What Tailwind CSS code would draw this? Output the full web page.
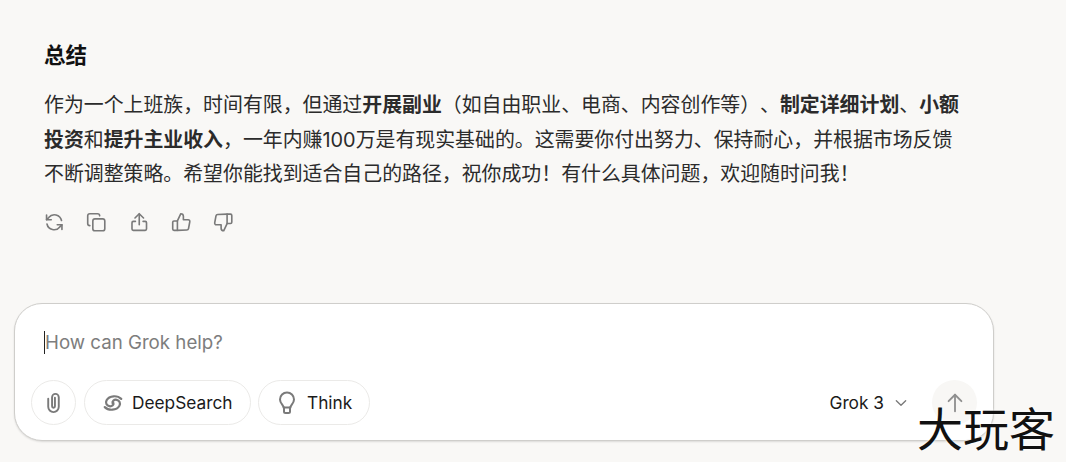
<!DOCTYPE html>
<html lang="zh-CN">
<head>
  <meta charset="UTF-8">
  <meta name="viewport" content="width=device-width, initial-scale=1.0">
  <title>Grok</title>
  <script src="https://cdn.jsdelivr.net/npm/@tailwindcss/browser@4"></script>
</head>
<body class="bg-[#f9f8f6] text-[#1a1a1a] font-['Inter','Noto_Sans_CJK_SC',sans-serif] overflow-hidden">
  <div class="relative h-[462px] w-[1066px]">
    <!-- message -->
    <div class="pl-[44px] pt-[39px]">
      <h3 class="text-[21.5px] leading-[32px] font-bold text-[#111]">总结</h3>
      <p class="mt-[17px] w-[920px] text-[19.9px] leading-[34.500px] text-[#2b2b2b] [text-spacing-trim:space-all]">作为一个上班族，时间有限，但通过<strong class="font-bold">开展副业</strong>（如自由职业、电商、内容创作等）、<strong class="font-bold">制定详细计划</strong>、<strong class="font-bold">小额投资</strong>和<strong class="font-bold">提升主业收入</strong>，一年内赚100万是有现实基础的。这需要你付出努力、保持耐心，并根据市场反馈不断调整策略。希望你能找到适合自己的路径，祝你成功！有什么具体问题，欢迎随时问我！</p>
      <div class="mt-[20px] flex gap-[21.800px] text-[#7a7a7a]">
        <svg class="size-[20.500px]" viewBox="0 0 24 24" fill="none" stroke="currentColor" stroke-width="1.900" stroke-linecap="round" stroke-linejoin="round"><path d="M20.500 10A8.500 8.500 0 0 0 5.500 6.500L3 9"/><path d="M3 3.500V9h5.500"/><path d="M3.500 14a8.500 8.500 0 0 0 15 3.500L21 15"/><path d="M21 20.500V15h-5.500"/></svg>
        <svg class="size-[20.500px]" viewBox="0 0 24 24" fill="none" stroke="currentColor" stroke-width="1.900" stroke-linecap="round" stroke-linejoin="round"><rect x="8" y="8" width="14" height="14" rx="2.500"/><path d="M4.500 16A2.500 2.500 0 0 1 2 13.500V4.500A2.500 2.500 0 0 1 4.500 2h9A2.500 2.500 0 0 1 16 4.500"/></svg>
        <svg class="size-[20.500px]" viewBox="0 0 24 24" fill="none" stroke="currentColor" stroke-width="1.900" stroke-linecap="round" stroke-linejoin="round"><path d="M12 15V2.500"/><path d="M7 7l5-5 5 5"/><path d="M7.500 11H5a1.500 1.500 0 0 0-1.500 1.500V20A1.500 1.500 0 0 0 5 21.500h14a1.500 1.500 0 0 0 1.500-1.500v-7.500A1.500 1.500 0 0 0 19 11h-2.500"/></svg>
        <svg class="size-[20.500px]" viewBox="0 0 24 24" fill="none" stroke="currentColor" stroke-width="1.900" stroke-linecap="round" stroke-linejoin="round"><path d="M7.500 10.500v11"/><path d="M7.500 21.500H3.500A1.500 1.500 0 0 1 2 20v-8a1.500 1.500 0 0 1 1.500-1.500h4l4-8.500a3 3 0 0 1 3 3v4h5.500a2 2 0 0 1 2 2.400l-1.500 8a2 2 0 0 1-2 1.600z"/></svg>
        <svg class="size-[20.500px]" viewBox="0 0 24 24" fill="none" stroke="currentColor" stroke-width="1.900" stroke-linecap="round" stroke-linejoin="round"><path d="M16.500 13.500v-11"/><path d="M16.500 2.500h4A1.500 1.500 0 0 1 22 4v8a1.500 1.500 0 0 1-1.500 1.500h-4l-4 8.500a3 3 0 0 1-3-3v-4H4a2 2 0 0 1-2-2.400l1.500-8a2 2 0 0 1 2-1.600z"/></svg>
      </div>
    </div>

    <!-- composer -->
    <div class="absolute left-[14px] top-[303px] h-[138px] w-[980px] rounded-[28px] border border-[#cfcecb] bg-white shadow-[0_1px_2px_rgba(0,0,0,0.12)]">
      <div class="pl-[29px] pt-[26px] text-[18.700px] leading-[26px] text-[#7d7d7d]">
        <span class="border-l border-[#222]">How can Grok help?</span>
      </div>
      <div class="absolute inset-x-[16px] top-[76px] flex items-center gap-[8px]">
        <button class="flex size-[45px] items-center justify-center rounded-full border border-[#ebeae8] text-[#7a7a7a]">
          <svg class="size-[23px]" viewBox="0 0 24 24" fill="none" stroke="currentColor" stroke-width="2" stroke-linecap="round"><path d="M6.500 8v8.500a5.500 5.500 0 0 0 11 0V6.500a3.500 3.500 0 0 0-7 0V16a1.500 1.500 0 0 0 3 0V7"/></svg>
        </button>
        <button class="flex h-[45px] w-[167px] items-center gap-[8px] rounded-full border border-[#ebeae8] pl-[17px] pt-[1px] text-[17.300px] text-[#1a1a1a]">
          <svg class="size-[22px] text-[#7a7a7a]" viewBox="0 0 24 24" fill="none" stroke="currentColor" stroke-width="2.400" stroke-linecap="round"><path d="M21 7.500C17 3.500 8 3.500 5 9c-1.500 3 0 6 3 6.500 3 .5 5-1.500 4.500-3.500"/><path d="M3 16.500c4 4 13 4 16-1.500 1.500-3 0-6-3-6.500-3-.5-5 1.500-4.500 3.500"/></svg>
          DeepSearch
        </button>
        <button class="-ml-[1px] flex h-[45px] w-[112px] items-center gap-[8px] rounded-full border border-[#ebeae8] pl-[16px] pt-[1px] text-[17.300px] text-[#1a1a1a]">
          <svg class="size-[24px] text-[#7a7a7a]" viewBox="0 0 24 24" fill="none" stroke="currentColor" stroke-width="2" stroke-linecap="round" stroke-linejoin="round"><path d="M8.500 16.500c0-2.500-3.500-4-3.500-8a7 7 0 0 1 14 0c0 4-3.500 5.500-3.500 8z"/><path d="M9 16.500v4a1.500 1.500 0 0 0 1.500 1.500h3a1.500 1.500 0 0 0 1.500-1.500v-4"/></svg>
          Think
        </button>
        <div class="ml-auto flex items-center">
          <span class="pt-[1px] text-[17.300px] text-[#1a1a1a]">Grok 3</span>
          <svg class="ml-[9px] size-[16px] text-[#7a7a7a]" viewBox="0 0 24 24" fill="none" stroke="currentColor" stroke-width="2" stroke-linecap="round" stroke-linejoin="round"><path d="M5 8.500l7 7 7-7"/></svg>
          <button class="ml-[23px] flex size-[45px] items-center justify-center rounded-full bg-[#f8f7f5] text-[#8f8f8f]">
            <svg class="size-[22px]" viewBox="0 0 24 24" fill="none" stroke="currentColor" stroke-width="2" stroke-linecap="round" stroke-linejoin="round"><path d="M12 21V3"/><path d="M5 10l7-7 7 7"/></svg>
          </button>
        </div>
      </div>
    </div>

    <!-- watermark -->
    <div class="absolute left-[917px] top-[400px] text-[46px] leading-[58px] font-normal whitespace-nowrap text-[#111] [text-shadow:0_0_3px_white]">大玩客</div>
  </div>
</body>
</html>
